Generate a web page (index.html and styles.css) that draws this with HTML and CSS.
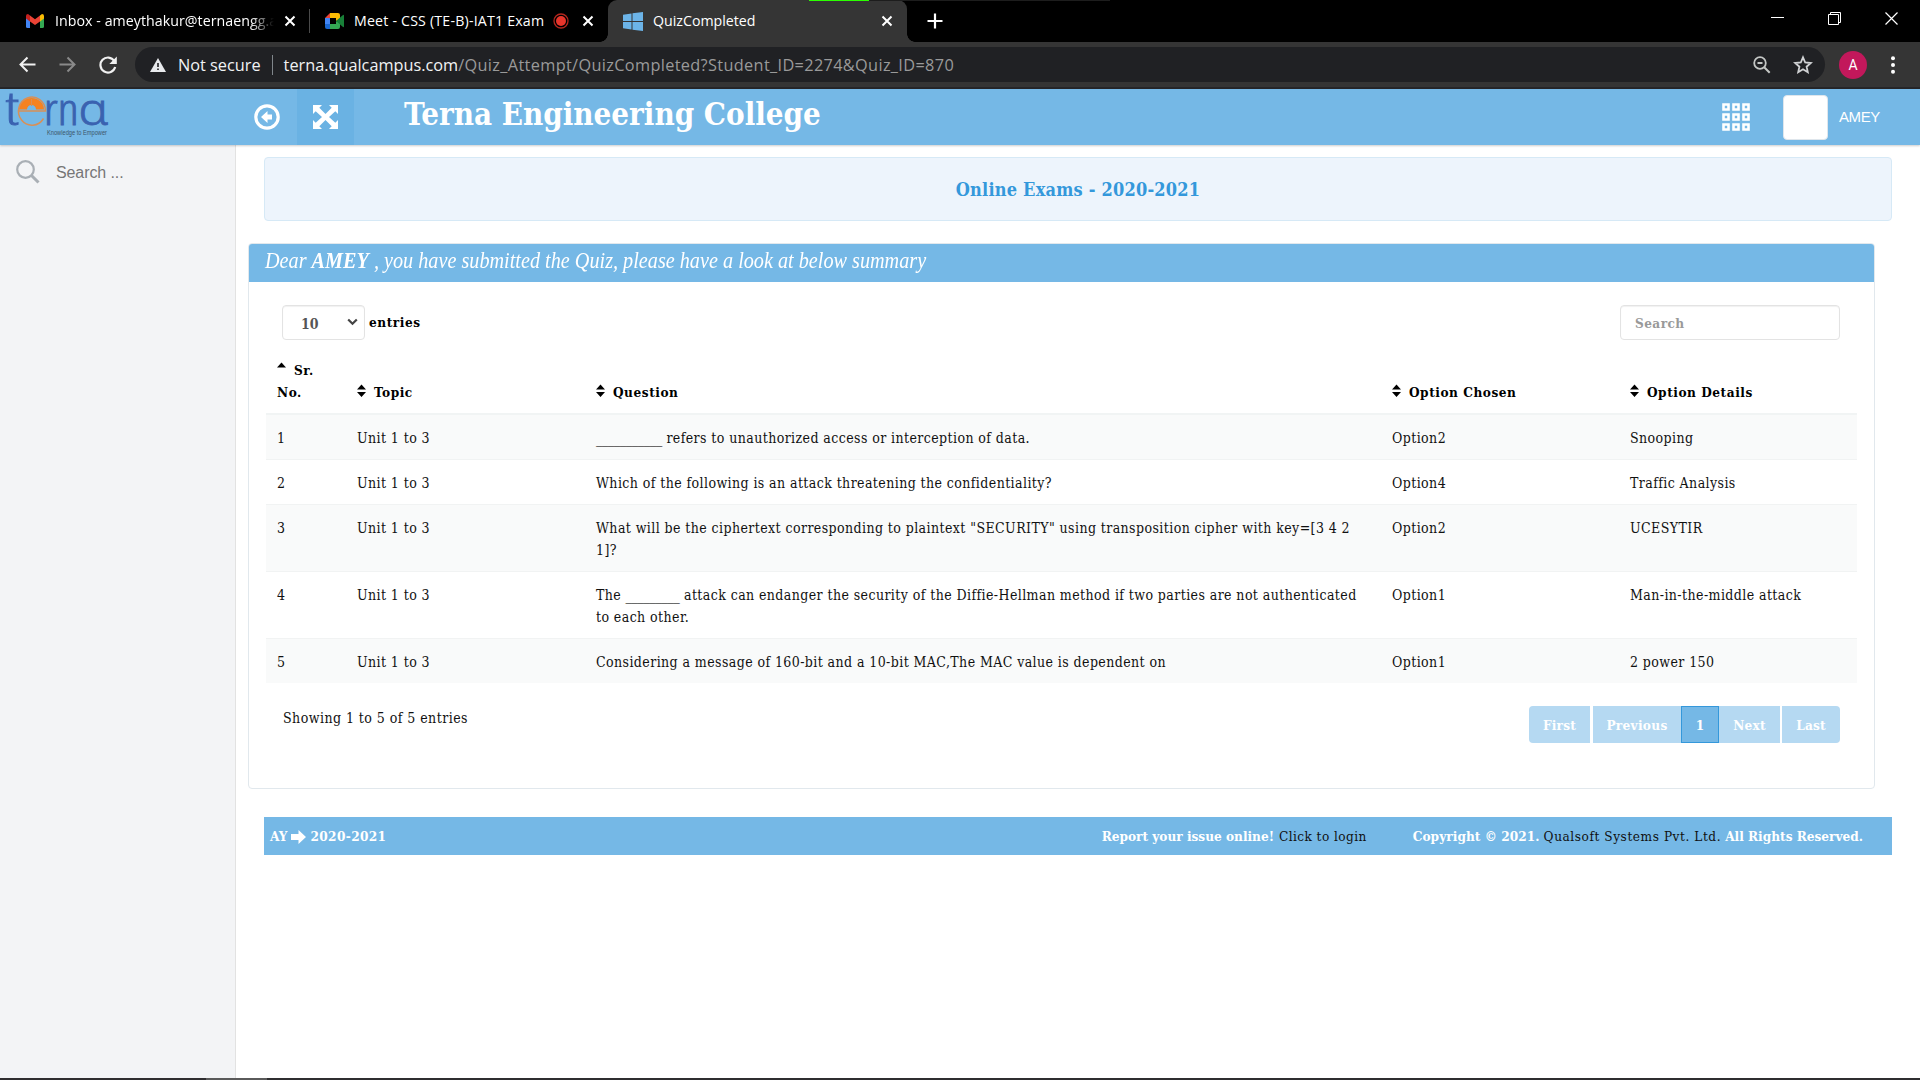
FILE: index.html
```html
<!DOCTYPE html>
<html lang="en">
<head>
<meta charset="utf-8">
<title>QuizCompleted</title>
<link rel="stylesheet" href="styles.css">
</head>
<body>
<div class="tabstrip">
  <div class="recording"></div>
  <div class="tab tab-mail">
    <svg class="fav" width="18" height="14" viewBox="0 0 18 14"><path d="M0 2v10.5Q0 14 1.500 14H4V6z" fill="#4285f4"/><path d="M18 2v10.500Q18 14 16.500 14H14V6z" fill="#34a853"/><path d="M14 1.500L16 0Q18 0 18 2V4.500L14 7.500z" fill="#fbbc04"/><path d="M4 1.500L9 5.300L14 1.500V7.500L9 11L4 7.500z" fill="#ea4335"/><path d="M0 2Q0 0 2 0L4 1.500V7.500L0 4.500z" fill="#c5221f"/></svg>
    <span class="tab-text t-inbox">Inbox - ameythakur@ternaengg.a</span>
    <svg class="close" width="12" height="12" viewBox="0 0 12 12"><path d="M1.500 1.500l9 9M10.500 1.500l-9 9" stroke="#fff" stroke-width="2"/></svg>
  </div>
  <div class="tab tab-meet">
    <svg class="fav" width="19" height="16" viewBox="0 0 19 16"><path d="M5 0h8q2 0 2 2v4l-4 2V5H5z" fill="#fbbc04"/><path d="M5 0v5H0z" fill="#ea4335"/><path d="M0 5h5v7H0z" fill="#4285f4"/><path d="M0 11h5v5H2q-2 0-2-2z" fill="#1967d2"/><path d="M5 11h6V8l4 2v4q0 2-2 2H5z" fill="#34a853"/><path d="M11 8l7-6q1-.5 1 .5v11q0 1-1 .5z" fill="#188038"/></svg>
    <span class="tab-text t-meet">Meet - CSS (TE-B)-IAT1 Exam</span>
    <svg class="rec" width="16" height="16" viewBox="0 0 16 16"><circle cx="8" cy="8" r="7" fill="none" stroke="#b3261e" stroke-width="1.300"/><circle cx="8" cy="8" r="5" fill="#e8352b"/></svg>
    <svg class="close" width="12" height="12" viewBox="0 0 12 12"><path d="M1.500 1.500l9 9M10.500 1.500l-9 9" stroke="#fff" stroke-width="2"/></svg>
  </div>
  <div class="tab tab-active">
    <svg class="fav" width="20" height="19" viewBox="0 0 20 19"><path d="M0 2.700L8.500 1.400V9H0zM9.500 1.200L20 0V9H9.500zM0 10h8.500v7.500L0 16.300zM9.500 10H20v9L9.500 17.700z" fill="#6cb4e8"/></svg>
    <span class="tab-text">QuizCompleted</span>
    <svg class="close" width="12" height="12" viewBox="0 0 12 12"><path d="M1.500 1.500l9 9M10.500 1.500l-9 9" stroke="#fff" stroke-width="2"/></svg>
  </div>
  <svg class="newtab" width="16" height="16" viewBox="0 0 16 16"><path d="M8 0.500v15M0.500 8h15" stroke="#fff" stroke-width="2.200"/></svg>
  <div class="winbtns">
    <svg width="13" height="13" viewBox="0 0 13 13"><path d="M0 5.500h13" stroke="#fff"/></svg>
    <svg width="13" height="13" viewBox="0 0 13 13"><path d="M.5 2.500h10v10H.5zM2.500 2.500V.5h10v10h-2" fill="none" stroke="#fff"/></svg>
    <svg width="13" height="13" viewBox="0 0 13 13"><path d="M.5 .5l12 12M12.500 .5l-12 12" stroke="#fff" stroke-width="1.200"/></svg>
  </div>
</div>
<div class="toolbar">
  <svg class="nav back" width="17" height="17" viewBox="0 0 17 17"><path d="M16.500 8.500H2M8.500 1.500l-7 7 7 7" fill="none" stroke="#f1f1f1" stroke-width="2"/></svg>
  <svg class="nav fwd" width="17" height="17" viewBox="0 0 17 17"><path d="M.5 8.500H15M8.500 1.500l7 7-7 7" fill="none" stroke="#8a8a8a" stroke-width="2"/></svg>
  <svg class="nav reload" width="18" height="18" viewBox="0 0 18 18"><path d="M15.300 5A7.500 7.500 0 1 0 16.200 11" fill="none" stroke="#f1f1f1" stroke-width="2.200"/><path d="M17.800 .5V8h-7.500z" fill="#f1f1f1"/></svg>
  <div class="omnibox">
    <svg class="warn" width="16" height="14" viewBox="0 0 16 14"><path d="M8 0l8 14H0z" fill="#e8eaed"/><path d="M7.200 5h1.600v4H7.200zM7.200 10.500h1.600v1.600H7.200z" fill="#202124"/></svg>
    <span class="t-notsecure">Not secure</span>
    <i class="sep"></i>
    <span class="url"><span class="t-host">terna.qualcampus.com</span><span class="t-path">/Quiz_Attempt/QuizCompleted?Student_ID=2274&amp;Quiz_ID=870</span></span>
    <svg class="zoom" width="18" height="18" viewBox="0 0 18 18"><circle cx="7" cy="7" r="5.800" fill="none" stroke="#c4c7c5" stroke-width="1.800"/><path d="M4.500 7h5M11.200 11.200l5.500 5.500" stroke="#c4c7c5" stroke-width="2"/></svg>
    <svg class="star" width="20" height="19" viewBox="0 0 20 19"><path d="M10 2.300l2.200 5.200 5.600.5-4.200 3.700 1.200 5.500L10 14.300l-4.800 2.900 1.200-5.500L2.200 8l5.600-.5z" fill="none" stroke="#d0d2d4" stroke-width="1.800"/></svg>
  </div>
  <div class="avatar">A</div>
  <svg class="dots" width="4" height="18" viewBox="0 0 4 18"><circle cx="2" cy="2.200" r="2" fill="#fff"/><circle cx="2" cy="9" r="2" fill="#fff"/><circle cx="2" cy="15.800" r="2" fill="#fff"/></svg>
</div>
<header class="appbar">
  <svg class="logo" width="110" height="50" viewBox="0 0 110 50">
    <g class="wordmark"><text x="5" y="36" font-size="46" textLength="14" lengthAdjust="spacingAndGlyphs">t</text><text x="44" y="36" font-size="44" textLength="64" lengthAdjust="spacingAndGlyphs">rnɑ</text></g>
    <path d="M19 20.500a12.500 11.500 0 0 1 25 0h-8a4.500 4.500 0 0 0-9 0z" fill="#f58220"/>
    <path d="M43.500 29.500A13.500 14 0 1 1 45.500 22H18" fill="none" stroke="#d98f56" stroke-width="1.500"/>
    <path d="M31.500 10v7" stroke="#d98f56"/>
    <text class="tagline" x="47" y="45.500" textLength="60" lengthAdjust="spacingAndGlyphs">Knowledge to Empower</text>
  </svg>
  <svg class="circle-left" width="26" height="26" viewBox="0 0 26 26"><circle cx="13" cy="13" r="11.200" fill="none" stroke="#fff" stroke-width="3.200"/><path d="M7 13l6.500-6v3.500H18v5h-4.500V19z" fill="#fff"/></svg>
  <div class="expand"><svg width="25" height="24" viewBox="0 0 25 24"><path d="M0 0h9L6.300 2.700 12.500 9l6.200-6.300L16 0h9v9l-2.700-2.700L16 12l6.300 5.700L25 15v9h-9l2.700-2.700L12.500 15l-6.200 6.300L9 24H0v-9l2.700 2.700L9 12 2.700 6.300 0 9z" fill="#fff"/></svg></div>
  <h1 class="t-college">Terna Engineering College</h1>
  <svg class="apps" width="28" height="28" viewBox="0 0 28 28"><path d="M1.500 1.500h5v5h-5zM11.500 1.500h5v5h-5zM21.500 1.500h5v5h-5zM1.500 11.500h5v5h-5zM11.500 11.500h5v5h-5zM21.500 11.500h5v5h-5zM1.500 21.500h5v5h-5zM11.500 21.500h5v5h-5zM21.500 21.500h5v5h-5z" fill="none" stroke="#fff" stroke-width="2.600"/></svg>
  <div class="photo"></div>
  <span class="t-user">AMEY</span>
</header>
<div class="page">
  <aside class="sidebar">
    <svg width="24" height="24" viewBox="0 0 24 24"><circle cx="9.500" cy="9.500" r="8.300" fill="none" stroke="#a9afb5" stroke-width="2.200"/><path d="M15.500 15.500l7 7" stroke="#a9afb5" stroke-width="3"/></svg>
    <span class="t-side">Search ...</span>
  </aside>
  <main class="main">
    <div class="banner">Online Exams - 2020-2021</div>
    <section class="panel">
      <div class="panel-head"><span class="t-dear">Dear <b>AMEY</b> , you have submitted the Quiz, please have a look at below summary</span></div>
      <div class="controls">
        <div class="select"><span>10</span><svg width="11" height="8" viewBox="0 0 11 8"><path d="M1.200 1.500l4.300 4.300 4.300-4.300" fill="none" stroke="#444" stroke-width="2.200"/></svg></div>
        <span class="t-entries bold">entries</span>
        <div class="searchbox">Search</div>
      </div>
      <div class="table">
        <div class="row head">
          <div><svg class="sort" width="9" height="13" viewBox="0 0 9 13"><path d="M0 5.500L4.500 .5 9 5.500z"/></svg><span class="bold">Sr.<br>No.</span></div>
          <div><svg class="sort" width="9" height="13" viewBox="0 0 9 13"><path d="M0 5.500L4.500 .5 9 5.500zM0 8h9l-4.500 5z"/></svg><span class="bold">Topic</span></div>
          <div><svg class="sort" width="9" height="13" viewBox="0 0 9 13"><path d="M0 5.500L4.500 .5 9 5.500zM0 8h9l-4.500 5z"/></svg><span class="bold">Question</span></div>
          <div><svg class="sort" width="9" height="13" viewBox="0 0 9 13"><path d="M0 5.500L4.500 .5 9 5.500zM0 8h9l-4.500 5z"/></svg><span class="bold">Option Chosen</span></div>
          <div><svg class="sort" width="9" height="13" viewBox="0 0 9 13"><path d="M0 5.500L4.500 .5 9 5.500zM0 8h9l-4.500 5z"/></svg><span class="bold">Option Details</span></div>
        </div>
        <div class="row odd"><div>1</div><div>Unit 1 to 3</div><div><span class="blank">___________</span> refers to unauthorized access or interception of data.</div><div>Option2</div><div>Snooping</div></div>
        <div class="row"><div>2</div><div>Unit 1 to 3</div><div>Which of the following is an attack threatening the confidentiality?</div><div>Option4</div><div>Traffic Analysis</div></div>
        <div class="row odd"><div>3</div><div>Unit 1 to 3</div><div>What will be the ciphertext corresponding to plaintext "SECURITY" using transposition cipher with key=[3 4 2<br>1]?</div><div>Option2</div><div>UCESYTIR</div></div>
        <div class="row"><div>4</div><div>Unit 1 to 3</div><div>The <span class="blank">_________</span> attack can endanger the security of the Diffie-Hellman method if two parties are not authenticated<br>to each other.</div><div>Option1</div><div>Man-in-the-middle attack</div></div>
        <div class="row odd"><div>5</div><div>Unit 1 to 3</div><div>Considering a message of 160-bit and a 10-bit MAC,The MAC value is dependent on</div><div>Option1</div><div>2 power 150</div></div>
      </div>
      <div class="below">
        <span class="info">Showing 1 to 5 of 5 entries</span>
        <div class="pager"><span class="p-first">First</span><span class="p-prev">Previous</span><span class="p-cur">1</span><span class="p-next">Next</span><span class="p-last">Last</span></div>
      </div>
    </section>
    <footer class="footer">
      <span>AY</span>
      <svg width="15" height="14" viewBox="0 0 15 14"><path d="M0 4h7.500V0L15 7l-7.500 7v-4H0z" fill="#fff"/></svg>
      <span class="f-year">2020-2021</span>
      <span class="f-report">Report your issue online!</span>
      <a class="f-link f-click">Click to login</a>
      <span class="f-copy">Copyright © 2021.</span>
      <a class="f-link f-qual">Qualsoft Systems Pvt. Ltd.</a>
      <span class="f-all">All Rights Reserved.</span>
    </footer>
  </main>
</div>
<div class="taskbar"><i></i></div>
</body>
</html>
```
FILE: styles.css
```css
* { box-sizing: border-box; }
html, body { margin: 0; height: 1080px; overflow: hidden; }
body { display: flex; flex-direction: column; background: #fff; color: #111; font: 13.5px/22.3px "DejaVu Serif Condensed", "DejaVu Serif", serif; font-stretch: condensed; }
svg { display: block; flex: none; }
span, a, h1 { white-space: nowrap; }

.tabstrip { position: relative; display: flex; flex: none; align-items: center; height: 42px; background: #000; color: #fff; font: 14.2px/20px "Open Sans", sans-serif; font-stretch: normal; }
.recording { position: absolute; left: 809px; top: 0; width: 301px; height: 1px; background: linear-gradient(90deg, #2bff00 60px, #1d1d1d 60px); z-index: 2; }
.tab { display: flex; flex: none; align-items: center; height: 42px; }
.tab-mail { width: 310px; padding-left: 26px; }
.tab-mail::after { content: ""; margin-left: 13px; width: 1px; height: 24px; background: #4a4a4a; }
.tab-text { flex: none; margin-left: 10px; }
.t-inbox { width: 219px; margin-left: 11px; overflow: hidden; letter-spacing: .05px; -webkit-mask: linear-gradient(90deg, #000 195px, transparent 219px); }
.tab-mail .close { margin-left: 10px; }
.tab-meet { width: 298px; padding-left: 15px; }
.t-meet { width: 192px; letter-spacing: .19px; }
.rec { margin-left: 7px; }
.tab-meet .close { margin-left: 13px; }
.tab-active { width: 299px; padding: 0 14px 0 15px; background: #353535; border-radius: 9px 9px 0 0; position: relative; }
.tab-active::before, .tab-active::after { content: ""; position: absolute; bottom: 0; width: 8px; height: 8px; }
.tab-active::before { left: -8px; background: radial-gradient(circle at 0 0, transparent 7.5px, #353535 8px); }
.tab-active::after { right: -8px; background: radial-gradient(circle at 100% 0, transparent 7.5px, #353535 8px); }
.tab-active .close { margin-left: auto; }
.newtab { margin-left: 20px; }
.winbtns { display: flex; gap: 44px; margin: -6px 22px 0 auto; }

.toolbar { display: flex; flex: none; align-items: center; height: 47px; padding-left: 19px; background: #353535; border-bottom: 2px solid #262629; font: 16.3px/24px "Open Sans", sans-serif; font-stretch: normal; }
.fwd { margin-left: 23px; }
.reload { margin-left: 23px; }
.omnibox { display: flex; align-items: center; width: 1690px; height: 35px; margin-left: 18px; padding: 0 12px 0 15px; border-radius: 18px; background: #202124; color: #f1f3f4; }
.t-notsecure { margin-left: 12px; }
.sep { width: 1px; height: 20px; margin: 0 11px; background: #80868b; }
.t-path { color: #9a9a9a; letter-spacing: .35px; }
.zoom { margin-left: auto; }
.star { margin-left: 22px; }
.avatar { width: 28px; height: 28px; margin-left: 14px; border-radius: 50%; background: #c2185b; color: #fff; font: 14px/28px Roboto, sans-serif; text-align: center; }
.dots { margin-left: 24px; }

.appbar { display: flex; align-items: center; height: 56px; background: #75b8e6; box-shadow: 0 1px 2px rgba(0,0,0,.2); position: relative; flex: none; color: #fff; }
.logo { margin-top: -6px; overflow: visible; }
.wordmark { font-family: "Open Sans", "Noto Sans", sans-serif; font-weight: 300; fill: #3a62b0; stroke: #3a62b0; stroke-width: .8px; }
.tagline { font: 6.5px "Liberation Sans", Arial, sans-serif; fill: #3c5568; }
.circle-left { margin-left: 144px; }
.expand { display: flex; align-items: center; justify-content: center; width: 57px; height: 56px; margin-left: 17px; background: #6ab2e3; }
.t-college { margin: -6px 0 0 50px; font-size: 31px; line-height: 40px; font-weight: bold; }
.apps { margin-left: auto; }
.photo { width: 45px; height: 45px; margin-left: 33px; border-radius: 4px; background: #fff; border: 1px solid #dfe6ec; }
.t-user { width: 81px; margin-left: 11px; font: 15px/20px "Liberation Sans", Arial, sans-serif; letter-spacing: -.4px; }

.page { display: flex; flex: 1; min-height: 0; }
.sidebar { display: flex; align-items: flex-start; width: 236px; padding: 15px 0 0 16px; background: #f3f4f6; border-right: 1px solid #e2e2e2; }
.t-side { margin-left: 16px; font: 16px/25px "Liberation Sans", Arial, sans-serif; letter-spacing: -.1px; color: #767676; }
.main { flex: 1; padding: 12px 28px 0 12px; }
.banner { height: 64px; margin-left: 16px; border: 1px solid #d6e9f6; border-radius: 4px; background: #edf4fc; text-align: center; line-height: 64px; font-size: 18px; letter-spacing: .21px; font-weight: bold; color: #3498db; }
.panel { width: 1627px; height: 546px; margin-top: 22px; border: 1px solid #e1e8ed; border-radius: 4px; }
.panel-head { height: 38px; padding-left: 16px; border-radius: 3px 3px 0 0; background: #75b8e6; color: #fff; font: italic 24px/32px "Liberation Serif", serif; }
.t-dear { display: inline-block; transform: scaleX(.842); transform-origin: 0 0; }
.bold { font-weight: bold; color: #000; letter-spacing: .54px; }
.controls { display: flex; align-items: center; padding: 23px 34px 0 33px; }
.select { display: flex; align-items: center; justify-content: space-between; width: 83px; height: 35px; padding: 3px 6px 0 18px; border: 1px solid #e3e3e3; border-radius: 4px; font-weight: bold; font-size: 14px; color: #555; box-shadow: inset 0 1px 1px rgba(0,0,0,.06); }
.select svg { margin-top: -5px; }
.t-entries { margin-left: 4px; }
.searchbox { width: 220px; height: 35px; margin-left: auto; padding-left: 14px; border: 1px solid #e3e3e3; border-radius: 4px; line-height: 34px; font-weight: bold; letter-spacing: .42px; color: #999; box-shadow: inset 0 1px 1px rgba(0,0,0,.06); }
.table { width: 1591px; margin: 19px 0 0 17px; }
.row { display: grid; grid-template-columns: 80px 239px 796px 238px 238px; border-top: 1px solid #f1f3f3; font-size: 14px; letter-spacing: .41px; }
.row > div { padding: 11.6px 0 9.8px 11px; white-space: nowrap; }
.blank { letter-spacing: -.3px; }
.head { height: 56px; border: 0; border-bottom: 2px solid #f1f4f4; align-items: end; font-size: 13.5px; letter-spacing: 0; }
.head + .row { border-top: 0; padding-bottom: .7px; }
.row.head > div { padding: 0 0 10px 11px; }
.head .sort { display: inline-block; margin: -6px 8px 0 0; vertical-align: 0; }
.odd { background: #f9fafa; }
.below { display: flex; justify-content: space-between; padding: 23px 34px 0 34px; }
.info { margin-top: 1px; font-size: 14px; letter-spacing: .45px; }
.pager { display: flex; height: 37px; color: #fff; font-weight: bold; text-align: center; line-height: 38px; }
.pager span { background: #b5d9f2; }
.p-first { width: 61px; margin-right: 3px; border-radius: 4px 0 0 4px; letter-spacing: .2px; }
.p-prev { width: 88px; letter-spacing: .3px; }
.pager .p-cur { width: 38px; background: #75b8e6; border: 1px solid #3498db; line-height: 36px; }
.p-next { width: 61px; margin-right: 2px; letter-spacing: .2px; }
.p-last { width: 58px; border-radius: 0 4px 4px 0; letter-spacing: .2px; }
.footer { display: flex; align-items: center; height: 38px; margin: 28px 0 0 16px; padding-left: 6px; background: #75b8e6; color: #fff; font-weight: bold; }
.footer svg { margin: 2px 4px 0; }
.f-year { letter-spacing: .37px; }
.f-report { margin-left: auto; }
.f-link { margin-left: 5px; color: #111; font-weight: normal; }
.f-click { letter-spacing: .42px; }
.f-qual { margin-left: 4px; letter-spacing: .56px; }
.f-copy { margin-left: 46px; letter-spacing: .06px; }
.f-all { margin: 0 29px 0 4px; }
.taskbar { flex: none; height: 2px; padding-left: 206px; background: #2f2e30; }
.taskbar i { display: block; width: 61px; height: 2px; background: #5a5a5a; }
```
